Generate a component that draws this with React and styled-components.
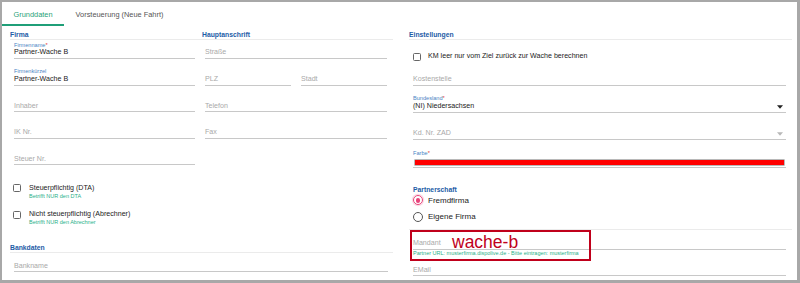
import React from 'react';
import styled, { createGlobalStyle } from 'styled-components';

const Global = createGlobalStyle`
  html, body { margin: 0; padding: 0; background: #a8a8a8; }
  body { font-family: "Liberation Sans", Arial, sans-serif; }
  #root { padding: 2px 3px 3px 2px; }
`;

const Frame = styled.div`
  background: #fff;
  height: 278px;
  overflow: hidden;
`;

const Tabs = styled.div`
  display: flex;
  height: 24px;
`;

const Tab = styled.div`
  box-sizing: border-box;
  height: 24px;
  padding: 2px 11.5px 0;
  display: flex;
  align-items: center;
  font-size: 7.4px;
  white-space: nowrap;
  color: ${p => (p.$active ? '#1f9f78' : '#555')};
  border-bottom: 2px solid ${p => (p.$active ? '#1f9f78' : 'transparent')};
`;

const Content = styled.div`
  display: grid;
  grid-template-columns: 383px 383px;
  column-gap: 16px;
  padding: 0 5px 0 8px;
`;

const Column = styled.div`
  display: flex;
  flex-direction: column;
`;

const Header = styled.div`
  box-sizing: border-box;
  height: 14px;
  margin-top: ${p => p.$mt || 0}px;
  padding-top: 4.5px;
  line-height: 8px;
  border-bottom: 1px solid #ebebeb;
  display: grid;
  grid-template-columns: ${p => p.$cols || '1fr'};
`;

const Title = styled.div`
  font-size: 6.8px;
  font-weight: 700;
  line-height: 8px;
  color: #1d5ca6;
  white-space: nowrap;
  margin-top: ${p => p.$mt || 0}px;
`;

const SubGrid = styled.div`
  display: grid;
  grid-template-columns: 187px 190px;
  column-gap: 5px;
`;

const Stack = styled.div`
  display: flex;
  flex-direction: column;
  gap: 7.6px;
  padding: ${p => p.$pad || '0'};
`;

const Pair = styled.div`
  display: grid;
  grid-template-columns: 86px 86px;
  column-gap: 10px;
`;

const FieldBox = styled.div`
  height: ${p => p.$h || 19}px;
  margin-top: ${p => p.$mt || 0}px;
  display: flex;
  flex-direction: column;
  justify-content: flex-end;
`;

const Label = styled.div`
  font-size: 5.6px;
  line-height: 7px;
  color: #4a84c4;
  white-space: nowrap;
`;

const Req = styled.span`
  color: #e53935;
`;

const InputLine = styled.div`
  box-sizing: border-box;
  height: 10.5px;
  padding-top: 0.9px;
  padding-bottom: 1px;
  line-height: 7.6px;
  border-bottom: 1px solid #c8c8c8;
  display: flex;
  align-items: center;
  justify-content: space-between;
  font-size: 7.1px;
  white-space: nowrap;
  color: ${p => (p.$placeholder ? '#a9a9a9' : '#222')};
`;

const ColorLine = styled.div`
  box-sizing: border-box;
  height: 10.5px;
  padding: 3px 2px 0;
  border-bottom: 1px solid #c8c8c8;
`;

const ColorBar = styled.div`
  height: 5px;
  background: #ff0000;
  box-shadow: 0 0 0 0.6px #8a8a8a;
`;

const Arrow = styled.svg`
  width: 6px;
  height: 4px;
  margin-right: 3px;
  flex: none;
`;

const CheckGroup = styled.div`
  display: flex;
  flex-direction: column;
  gap: 10.5px;
  margin-top: 18.5px;
`;

const CheckItem = styled.div`
  display: grid;
  grid-template-columns: 8px 1fr;
  column-gap: ${p => p.$gap || 8}px;
  margin-left: ${p => p.$ml || 0}px;
  margin-top: ${p => p.$mt || 0}px;
`;

const Box = styled.div`
  box-sizing: border-box;
  width: 8px;
  height: 8px;
  margin-top: 0.5px;
  border: 1.2px solid #666;
  border-radius: 1.5px;
`;

const CheckText = styled.div`
  font-size: 7.1px;
  line-height: 9px;
  color: #222;
  white-space: nowrap;
`;

const Helper = styled.div`
  font-size: 5.5px;
  line-height: 7px;
  color: #2ab089;
  white-space: nowrap;
`;

const RadioRow = styled.div`
  display: flex;
  align-items: center;
  gap: 5px;
  height: 10px;
  margin-top: ${p => p.$mt || 0}px;
`;

const RadioCircle = styled.div`
  box-sizing: border-box;
  width: 10px;
  height: 10px;
  border-radius: 50%;
  border: 1.3px solid ${p => (p.$on ? '#e8437a' : '#555')};
  display: flex;
  align-items: center;
  justify-content: center;
  box-shadow: ${p => (p.$on ? '0 0 0 1.2px rgba(232,67,122,0.18)' : 'none')};
  &::after {
    content: '';
    width: 4.6px;
    height: 4.6px;
    border-radius: 50%;
    background: ${p => (p.$on ? '#e8437a' : 'transparent')};
  }
`;

const RadioText = styled.div`
  font-size: 8px;
  color: #222;
  white-space: nowrap;
`;

const Divider = styled.div`
  margin: 7.5px -6px 0 -4px;
  border-top: 1px solid #ebebeb;
`;

const MandantGroup = styled.div`
  position: relative;
  padding-top: 0.5px;
`;

const Annotation = styled.div`
  position: absolute;
  left: -3px;
  top: 0;
  width: 181px;
  height: 31px;
  box-sizing: border-box;
  border: 2px solid #c0001b;
`;

const AnnotationText = styled.div`
  position: absolute;
  left: 40px;
  top: 3.1px;
  font-family: "Liberation Sans", Arial, sans-serif;
  font-size: 17.5px;
  line-height: 0.7;
  color: #c0001b;
  white-space: nowrap;
`;

const Body = styled.div`
  display: flex;
  flex-direction: column;
  padding: ${p => p.$pad || '0'};
`;

function Field({ label, required, value, placeholder, arrow, arrowColor, h, mt }) {
  return (
    <FieldBox $h={h} $mt={mt}>
      {label && (
        <Label>
          {label}
          {required && <Req>*</Req>}
        </Label>
      )}
      <InputLine $placeholder={!value}>
        <span>{value || placeholder}</span>
        {arrow && (
          <Arrow viewBox="0 0 6 4">
            <polygon points="0,0.3 6,0.3 3,3.7" fill={arrowColor} />
          </Arrow>
        )}
      </InputLine>
    </FieldBox>
  );
}

function Check({ text, helper, gap, ml, mt }) {
  return (
    <CheckItem $gap={gap} $ml={ml} $mt={mt}>
      <Box />
      <div>
        <CheckText>{text}</CheckText>
        {helper && <Helper>{helper}</Helper>}
      </div>
    </CheckItem>
  );
}

export default function App() {
  return (
    <>
      <Global />
      <Frame>
        <Tabs>
          <Tab $active>Grunddaten</Tab>
          <Tab>Vorsteuerung (Neue Fahrt)</Tab>
        </Tabs>
        <Content>
          <Column>
            <Header $cols="192px 1fr">
              <Title>Firma</Title>
              <Title>Hauptanschrift</Title>
            </Header>
            <SubGrid>
              <div>
                <Stack $pad="0 2px 0 4px">
                  <Field label="Firmenname" required value="Partner-Wache B" />
                  <Field label="Firmenkürzel" value="Partner-Wache B" />
                  <Field placeholder="Inhaber" />
                  <Field placeholder="IK Nr." />
                  <Field placeholder="Steuer Nr." />
                </Stack>
                <CheckGroup>
                  <Check ml={3} text="Steuerpflichtig (DTA)" helper="Betrifft NUR den DTA" />
                  <Check ml={3} text="Nicht steuerpflichtig (Abrechner)" helper="Betrifft NUR den Abrechner" />
                </CheckGroup>
              </div>
              <Stack $pad="0 5px 0 3px">
                <Field placeholder="Straße" />
                <Pair>
                  <Field placeholder="PLZ" />
                  <Field placeholder="Stadt" />
                </Pair>
                <Field placeholder="Telefon" />
                <Field placeholder="Fax" />
              </Stack>
            </SubGrid>
            <Header $mt={13}>
              <Title>Bankdaten</Title>
            </Header>
            <Body $pad="0 5px 0 4px">
              <Field placeholder="Bankname" />
            </Body>
          </Column>

          <Column>
            <Header>
              <Title>Einstellungen</Title>
            </Header>
            <Body $pad="0 6px 0 4px">
              <Check gap={7} mt={12} text="KM leer nur vom Ziel zurück zur Wache berechnen" />
              <Field mt={6} placeholder="Kostenstelle" />
              <Field mt={7.7} label="Bundesland" required value="(NI) Niedersachsen" arrow arrowColor="#222" />
              <Field mt={8} placeholder="Kd. Nr. ZAD" arrow arrowColor="#b8b8b8" />
              <FieldBox $h={21} $mt={7.3}>
                <Label>
                  Farbe<Req>*</Req>
                </Label>
                <ColorLine>
                  <ColorBar />
                </ColorLine>
              </FieldBox>
              <Title $mt={18}>Partnerschaft</Title>
              <RadioRow $mt={1.5}>
                <RadioCircle $on />
                <RadioText>Fremdfirma</RadioText>
              </RadioRow>
              <RadioRow $mt={6.5}>
                <RadioCircle />
                <RadioText>Eigene Firma</RadioText>
              </RadioRow>
              <Divider />
              <MandantGroup>
                <Field placeholder="Mandant" />
                <Helper>Partner URL: musterfirma.dispolive.de - Bitte eintragen: musterfirma</Helper>
                <Annotation>
                  <AnnotationText>wache-b</AnnotationText>
                </Annotation>
              </MandantGroup>
              <Field mt={0.5} placeholder="EMail" />
            </Body>
          </Column>
        </Content>
      </Frame>
    </>
  );
}
